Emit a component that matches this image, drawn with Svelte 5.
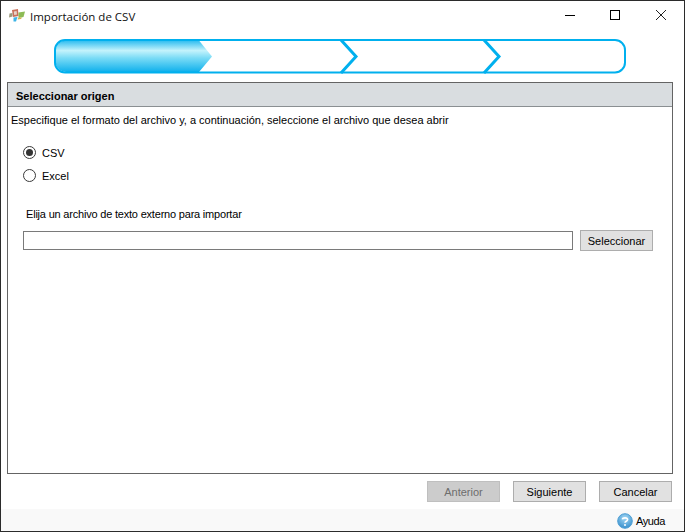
<script>
  let format = $state('csv');
</script>

<div class="window">
  <header class="titlebar">
    <svg class="appicon" viewBox="0 0 18 16" width="18" height="16" aria-hidden="true">
      <path d="M3 2 L9 1 L9.5 8 L4 9 Z" fill="#c8705a"/>
      <path d="M4.8 3.5 L7.6 3 L8 6.6 L5.2 7 Z" fill="#e9d3c8"/>
      <path d="M9.5 4.5 L16 3.5 L14.5 9 L9.5 10 Z" fill="#8dbb55"/>
      <path d="M0.5 5.5 L3.5 5 L3.5 8.5 L0 9.5 Z" fill="#9c9a7c"/>
      <path d="M4.5 9.5 L8.5 9 L7 13.5 L4.5 13.5 Z" fill="#3cb4e6"/>
      <path d="M9 10 L13 9.5 L12 11 L8.6 11.5 Z" fill="#d8b24c"/>
    </svg>
    <span class="title">Importación de CSV</span>
    <div class="controls">
      <svg viewBox="0 0 46 30" width="46" height="30" aria-hidden="true"><path d="M19 14.5H29" stroke="#000" fill="none"/></svg>
      <svg viewBox="0 0 46 30" width="46" height="30" aria-hidden="true"><rect x="18.5" y="9.5" width="9" height="9" stroke="#000" fill="none"/></svg>
      <svg viewBox="0 0 46 30" width="46" height="30" aria-hidden="true"><path d="M18 9L28 19M28 9L18 19" stroke="#222" fill="none"/></svg>
    </div>
  </header>

  <div class="stepper">
    <svg viewBox="0 0 572 35" width="572" height="35" aria-hidden="true">
      <defs>
        <linearGradient id="stepfill" x1="0" y1="0" x2="0" y2="1">
          <stop offset="0" stop-color="#2cbcf0"/>
          <stop offset="0.32" stop-color="#c4f3fc"/>
          <stop offset="0.55" stop-color="#7cdcf6"/>
          <stop offset="1" stop-color="#0fb0ec"/>
        </linearGradient>
      </defs>
      <path d="M12 1.5H145L158 17.5L145 33H12A10.5 10.5 0 0 1 1.5 23V12A10.5 10.5 0 0 1 12 1.5Z" fill="url(#stepfill)"/>
      <rect x="1" y="1" width="570" height="32.5" rx="10" fill="none" stroke="#00b0ee" stroke-width="2"/>
      <path d="M287 1L302 17.5L287 34M430 1L445 17.5L430 34" fill="none" stroke="#00b0ee" stroke-width="3"/>
    </svg>
  </div>

  <section class="panel">
    <h2 class="panelhead">Seleccionar origen</h2>
    <p class="intro">Especifique el formato del archivo y, a continuación, seleccione el archivo que desea abrir</p>

    <div class="radios">
      <label class="radio">
        <input type="radio" name="format" value="csv" bind:group={format} />
        <span class="dot"></span>
        <span>CSV</span>
      </label>
      <label class="radio">
        <input type="radio" name="format" value="excel" bind:group={format} />
        <span class="dot"></span>
        <span>Excel</span>
      </label>
    </div>

    <p class="filelabel">Elija un archivo de texto externo para importar</p>
    <div class="filerow">
      <input class="fileinput" type="text" aria-label="Archivo" />
      <button class="btn select">Seleccionar</button>
    </div>
  </section>

  <div class="actions">
    <button class="btn action" disabled>Anterior</button>
    <button class="btn action">Siguiente</button>
    <button class="btn action">Cancelar</button>
  </div>

  <footer class="help">
    <svg viewBox="0 0 16 16" width="16" height="16" aria-hidden="true">
      <defs>
        <radialGradient id="helpfill" cx="0.5" cy="0.3" r="0.8">
          <stop offset="0" stop-color="#a4d8f4"/>
          <stop offset="1" stop-color="#2a86c8"/>
        </radialGradient>
      </defs>
      <circle cx="8" cy="8" r="7.3" fill="url(#helpfill)" stroke="#4f9fd4"/>
      <path d="M5.4 6.4C5.6 4.4 10.6 4.2 10.6 6.6C10.6 8.2 8 8.2 8 9.8" fill="none" stroke="#fff" stroke-width="1.6"/>
      <circle cx="8" cy="12" r="1" fill="#fff"/>
    </svg>
    <span class="helptext">Ayuda</span>
  </footer>
</div>

<style>
  :global(body) {
    margin: 0;
    background: #fff;
  }
  .window {
    box-sizing: border-box;
    width: 685px;
    height: 532px;
    border: 1px solid #2b2b2b;
    background: #fff;
    display: flex;
    flex-direction: column;
    font-family: "Liberation Sans", Arial, sans-serif;
    font-size: 11px;
    color: #000;
    overflow: hidden;
  }
  .titlebar {
    height: 30px;
    flex: none;
    display: flex;
    align-items: center;
    padding-left: 8px;
  }
  .appicon {
    flex: none;
    margin-right: 3px;
  }
  .title {
    font-family: "Open Sans", "Noto Sans", sans-serif;
    font-size: 11.5px;
    color: #111;
  }
  .controls {
    margin-left: auto;
    display: flex;
  }
  .controls svg {
    display: block;
  }
  .stepper {
    flex: none;
    height: 35px;
    margin: 8px 0 0 53px;
  }
  .stepper svg {
    display: block;
  }
  .panel {
    flex: none;
    box-sizing: border-box;
    height: 392px;
    margin: 8px 11px 0 6px;
    border: 1px solid #646464;
  }
  .panelhead {
    box-sizing: border-box;
    height: 24px;
    margin: 0;
    padding: 3px 0 0 8px;
    border-bottom: 1px solid #8a8f92;
    background: #d9dde0;
    font-size: 11px;
    font-weight: 700;
    line-height: 20px;
  }
  .intro {
    margin: 6px 0 0 3px;
    line-height: 14px;
  }
  .radios {
    margin: 19px 0 0 15px;
    display: flex;
    flex-direction: column;
    gap: 10px;
  }
  .radio {
    display: flex;
    align-items: center;
    height: 13px;
    gap: 6px;
  }
  .radio input {
    position: absolute;
    opacity: 0;
    margin: 0;
  }
  .dot {
    box-sizing: border-box;
    width: 13px;
    height: 13px;
    border: 1px solid #3a3a3a;
    border-radius: 50%;
    background: #fff;
    display: flex;
    align-items: center;
    justify-content: center;
  }
  .radio input:checked + .dot::after {
    content: "";
    width: 7px;
    height: 7px;
    border-radius: 50%;
    background: #333;
  }
  .filelabel {
    margin: 25px 0 0 18px;
    line-height: 14px;
    letter-spacing: -0.2px;
  }
  .filerow {
    margin: 9px 0 0 15px;
    display: flex;
    align-items: center;
    gap: 7px;
  }
  .fileinput {
    box-sizing: border-box;
    width: 550px;
    height: 19px;
    border: 1px solid #7a7a7a;
    padding: 0;
    background: #fff;
  }
  .btn {
    box-sizing: border-box;
    border: 1px solid #adadad;
    background: #e1e1e1;
    padding: 0;
    font: inherit;
    color: #000;
  }
  .select {
    width: 73px;
    height: 21px;
  }
  .actions {
    flex: none;
    display: flex;
    justify-content: flex-end;
    gap: 13px;
    margin: 7px 12px 0 0;
  }
  .action {
    width: 73px;
    height: 21px;
  }
  .action:disabled {
    background: #cccccc;
    border-color: #bfbfbf;
    color: #6d6d6d;
  }
  .help {
    flex: 1;
    margin-top: 7px;
    padding: 2px 19px 0 0;
    background: #f9f9f9;
    display: flex;
    align-items: center;
    justify-content: flex-end;
    gap: 3px;
  }
  .helptext {
    letter-spacing: -0.4px;
  }
</style>
